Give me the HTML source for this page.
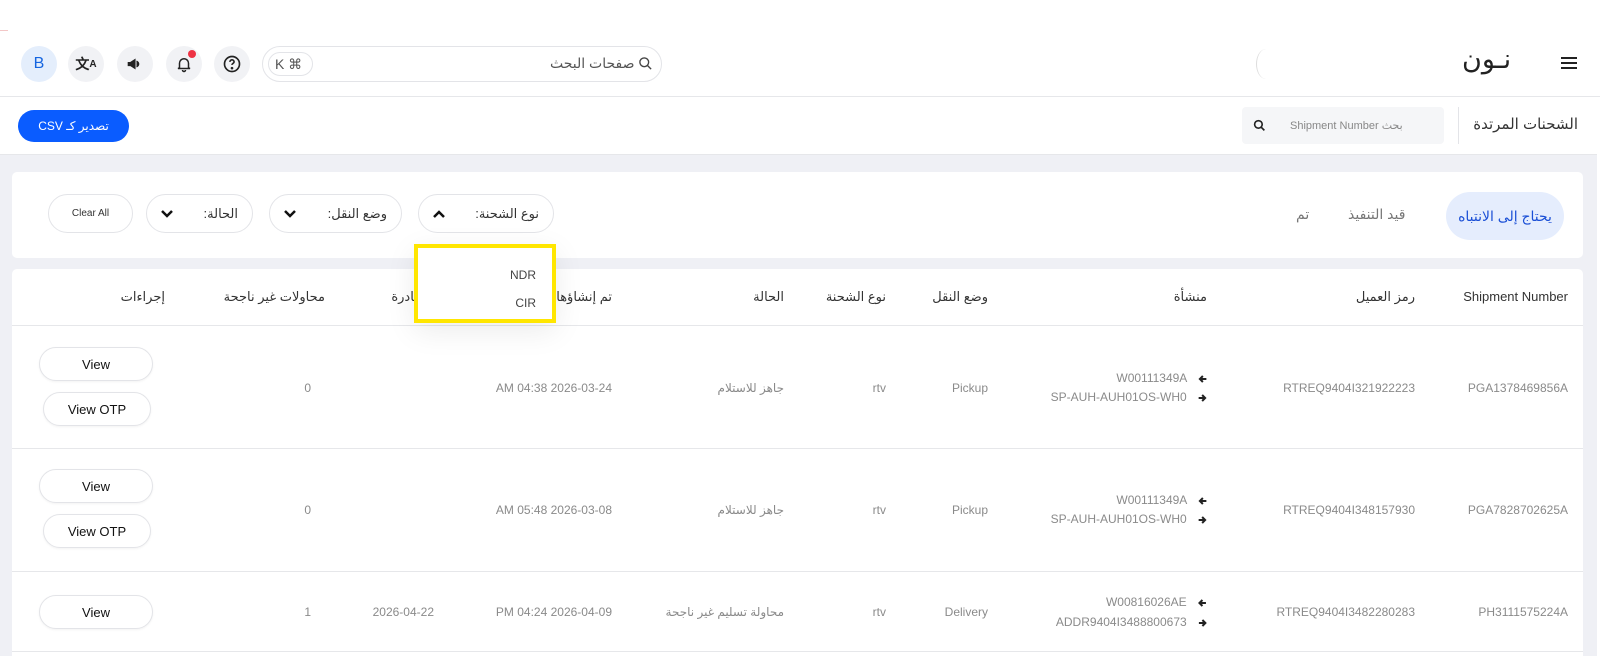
<!DOCTYPE html>
<html><head><meta charset="utf-8">
<style>
*{box-sizing:border-box;margin:0;padding:0}
body{width:1609px;height:656px;overflow:hidden;background:#fff;font-family:"Liberation Sans","DejaVu Sans",sans-serif;position:relative;color:#333}
.a{position:absolute}
.ic{position:absolute;width:36px;height:36px;border-radius:50%;background:#f1f2f5;display:flex;align-items:center;justify-content:center;top:46px}
.chip{position:absolute;top:194px;height:39px;border:1px solid #e3e4e8;border-radius:20px;background:#fff;font-size:13px;color:#333;display:flex;align-items:center;justify-content:space-between;padding:0 14px;direction:rtl}
.th{position:absolute;top:289px;font-size:13px;color:#333;white-space:nowrap;transform:translateX(-100%)}
.td{position:absolute;font-size:12px;color:#8a8a8a;white-space:nowrap;transform:translate(-100%,-50%)}
.btn{position:absolute;height:34px;border:1px solid #e3e4e8;border-radius:17px;background:#fff;font-size:13px;color:#111;display:flex;align-items:center;justify-content:center;box-shadow:0 1px 2px rgba(0,0,0,.05)}
.hl{position:absolute;left:12px;width:1571px;height:1px;background:#e6e7ea}
.arr{display:inline-block;vertical-align:middle;margin-left:8px}
</style></head><body>
<div class="a" style="left:0;top:30px;width:8px;height:1px;background:#f3c7c7"></div>
<div class="a" style="left:21px;top:46px;width:36px;height:36px;border-radius:50%;background:#e4eefc;color:#1565e0;font-size:16px;display:flex;align-items:center;justify-content:center">B</div>
<div class="ic" style="left:68px;font-size:14px;font-weight:bold;color:#222">文<sub style="font-size:10px">A</sub></div>
<div class="ic" style="left:117px"><svg width="18" height="18" viewBox="0 0 24 24"><path d="M3 10v4h3l6 4V6L6 10z M14 8c2 1 3 2.5 3 4s-1 3-3 4" fill="#222" stroke="#222" stroke-width="1.5"/></svg></div>
<div class="ic" style="left:166px"><svg width="18" height="18" viewBox="0 0 24 24" fill="none" stroke="#222" stroke-width="2"><path d="M6 17V11a6 6 0 0 1 12 0v6l2 1H4z M10 20a2 2 0 0 0 4 0"/></svg><span class="a" style="left:22px;top:4px;width:8px;height:8px;border-radius:50%;background:#ee3344"></span></div>
<div class="ic" style="left:214px"><svg width="20" height="20" viewBox="0 0 24 24" fill="none" stroke="#222" stroke-width="2"><circle cx="12" cy="12" r="9"/><path d="M9.5 9.5a2.5 2.5 0 0 1 5 0c0 1.5-2.5 2-2.5 3.5"/><circle cx="12" cy="17" r=".6" fill="#222"/></svg></div>
<div class="a" style="left:262px;top:46px;width:400px;height:36px;border:1px solid #e3e4e8;border-radius:18px"></div>
<div class="a" style="left:268px;top:52px;width:45px;height:24px;border:1px solid #e3e4e8;border-radius:12px;font-size:14px;color:#555;padding-left:6px;line-height:22px">K ⌘</div>
<div class="a" style="left:550px;top:55px;font-size:14px;color:#555;direction:rtl">صفحات البحث</div>
<svg class="a" style="left:638px;top:56px" width="15" height="15" viewBox="0 0 24 24" fill="none" stroke="#444" stroke-width="2.2"><circle cx="10" cy="10" r="7"/><path d="M15 15l6 6"/></svg>
<div class="a" style="left:1256px;top:49px;width:20px;height:30px;border-left:1px solid #ddd;border-radius:50%"></div>
<div class="a" style="left:1462px;top:44px;font-size:27px;color:#222;direction:rtl">نـون</div>
<div class="a" style="left:1561px;top:57px;width:16px;height:2px;background:#222;box-shadow:0 5px 0 #222,0 10px 0 #222"></div>
<div class="a" style="left:0;top:96px;width:1600px;height:1px;background:#e6e7ea"></div>
<div class="a" style="left:18px;top:110px;width:111px;height:32px;border-radius:16px;background:#0a5cff;color:#fff;font-size:12px;display:flex;align-items:center;justify-content:center;direction:rtl">تصدير كـ CSV</div>
<div class="a" style="left:1242px;top:107px;width:202px;height:37px;background:#f5f6f8;border-radius:4px"></div>
<svg class="a" style="left:1253px;top:119px" width="13" height="13" viewBox="0 0 24 24" fill="none" stroke="#222" stroke-width="3"><circle cx="10" cy="10" r="7"/><path d="M15 15l6 6"/></svg>
<div class="a" style="left:1290px;top:119px;width:146px;font-size:11px;color:#888;direction:rtl;text-align:left">بحث Shipment Number</div>
<div class="a" style="left:1458px;top:107px;width:1px;height:37px;background:#e3e4e8"></div>
<div class="a" style="left:1460px;top:115px;width:118px;font-size:15px;color:#333;direction:rtl;text-align:right">الشحنات المرتدة</div>
<div class="a" style="left:0;top:154px;width:1597px;height:502px;background:#eff0f5;border-top:1px solid #e6e7ea"></div>
<div class="a" style="left:12px;top:172px;width:1571px;height:86px;background:#fff;border-radius:5px"></div>
<div class="a" style="left:1446px;top:192px;width:118px;height:48px;border-radius:24px;background:#e5edfd;color:#1a4fd6;font-size:14px;display:flex;align-items:center;justify-content:center;direction:rtl">يحتاج إلى الانتباه</div>
<div class="a" style="left:1348px;top:206px;font-size:14px;color:#777;direction:rtl">قيد التنفيذ</div>
<div class="a" style="left:1296px;top:206px;font-size:14px;color:#777">تم</div>
<div class="chip" style="left:418px;width:136px"><span>نوع الشحنة:</span><svg width="12" height="8" viewBox="0 0 12 8"><path d="M1 7l5-5 5 5" fill="none" stroke="#111" stroke-width="2.5"/></svg></div>
<div class="chip" style="left:269px;width:133px"><span>وضع النقل:</span><svg width="12" height="8" viewBox="0 0 12 8"><path d="M1 1l5 5 5-5" fill="none" stroke="#111" stroke-width="2.5"/></svg></div>
<div class="chip" style="left:146px;width:107px"><span>الحالة:</span><svg width="12" height="8" viewBox="0 0 12 8"><path d="M1 1l5 5 5-5" fill="none" stroke="#111" stroke-width="2.5"/></svg></div>
<div class="chip" style="left:48px;width:85px;justify-content:center;font-size:10px;direction:ltr;padding:0">Clear All</div>
<div class="a" style="left:12px;top:269px;width:1571px;height:400px;background:#fff;border-radius:5px"></div>
<div class="th" style="left:1568px">Shipment Number</div>
<div class="th" style="left:1415px">رمز العميل</div>
<div class="th" style="left:1207px">منشأة</div>
<div class="th" style="left:988px">وضع النقل</div>
<div class="th" style="left:886px">نوع الشحنة</div>
<div class="th" style="left:784px">الحالة</div>
<div class="th" style="left:612px">تم إنشاؤها</div>
<div class="th" style="left:470px">تاريخ المصادرة</div>
<div class="th" style="left:325px">محاولات غير ناجحة</div>
<div class="th" style="left:165px">إجراءات</div>
<div class="hl" style="top:325px"></div>
<div class="hl" style="top:448px"></div>
<div class="hl" style="top:571px"></div>
<div class="hl" style="top:651px"></div>
<div class="td" style="left:1568px;top:388px">PGA1378469856A</div>
<div class="td" style="left:1415px;top:388px">RTREQ9404I321922223</div>
<div class="td" style="left:1207px;top:378px">W00111349A <svg class="arr" width="9" height="8" viewBox="0 0 9 8"><path d="M8 4H2M4.5 1L1.5 4l3 3" fill="none" stroke="#222" stroke-width="2"/></svg></div>
<div class="td" style="left:1207px;top:397px">SP-AUH-AUH01OS-WH0 <svg class="arr" width="9" height="8" viewBox="0 0 9 8"><path d="M1 4h6M4.5 1l3 3-3 3" fill="none" stroke="#222" stroke-width="2"/></svg></div>
<div class="td" style="left:988px;top:388px">Pickup</div>
<div class="td" style="left:886px;top:388px">rtv</div>
<div class="td" style="left:784px;top:388px">جاهز للاستلام</div>
<div class="td" style="left:612px;top:388px">AM 04:38 2026-03-24</div>
<div class="td" style="left:311px;top:388px">0</div>
<div class="btn" style="left:39px;top:347px;width:114px">View</div>
<div class="btn" style="left:43px;top:392px;width:108px">View OTP</div>
<div class="td" style="left:1568px;top:510px">PGA7828702625A</div>
<div class="td" style="left:1415px;top:510px">RTREQ9404I348157930</div>
<div class="td" style="left:1207px;top:500px">W00111349A <svg class="arr" width="9" height="8" viewBox="0 0 9 8"><path d="M8 4H2M4.5 1L1.5 4l3 3" fill="none" stroke="#222" stroke-width="2"/></svg></div>
<div class="td" style="left:1207px;top:519px">SP-AUH-AUH01OS-WH0 <svg class="arr" width="9" height="8" viewBox="0 0 9 8"><path d="M1 4h6M4.5 1l3 3-3 3" fill="none" stroke="#222" stroke-width="2"/></svg></div>
<div class="td" style="left:988px;top:510px">Pickup</div>
<div class="td" style="left:886px;top:510px">rtv</div>
<div class="td" style="left:784px;top:510px">جاهز للاستلام</div>
<div class="td" style="left:612px;top:510px">AM 05:48 2026-03-08</div>
<div class="td" style="left:311px;top:510px">0</div>
<div class="btn" style="left:39px;top:469px;width:114px">View</div>
<div class="btn" style="left:43px;top:514px;width:108px">View OTP</div>
<div class="td" style="left:1568px;top:612px">PH3111575224A</div>
<div class="td" style="left:1415px;top:612px">RTREQ9404I3482280283</div>
<div class="td" style="left:1207px;top:602px">W00816026AE <svg class="arr" width="9" height="8" viewBox="0 0 9 8"><path d="M8 4H2M4.5 1L1.5 4l3 3" fill="none" stroke="#222" stroke-width="2"/></svg></div>
<div class="td" style="left:1207px;top:622px">ADDR9404I3488800673 <svg class="arr" width="9" height="8" viewBox="0 0 9 8"><path d="M1 4h6M4.5 1l3 3-3 3" fill="none" stroke="#222" stroke-width="2"/></svg></div>
<div class="td" style="left:988px;top:612px">Delivery</div>
<div class="td" style="left:886px;top:612px">rtv</div>
<div class="td" style="left:784px;top:612px">محاولة تسليم غير ناجحة</div>
<div class="td" style="left:612px;top:612px">PM 04:24 2026-04-09</div>
<div class="td" style="left:434px;top:612px">2026-04-22</div>
<div class="td" style="left:311px;top:612px">1</div>
<div class="btn" style="left:39px;top:595px;width:114px">View</div>
<div class="a" style="left:414px;top:244px;width:142px;height:79px;background:#fff;border:4px solid #ffe600;box-shadow:0 8px 30px rgba(0,0,0,.08)"></div>
<div class="a" style="left:498px;top:268px;width:38px;text-align:right;font-size:12px;color:#444">NDR</div>
<div class="a" style="left:498px;top:296px;width:38px;text-align:right;font-size:12px;color:#444">CIR</div>
</body></html>
